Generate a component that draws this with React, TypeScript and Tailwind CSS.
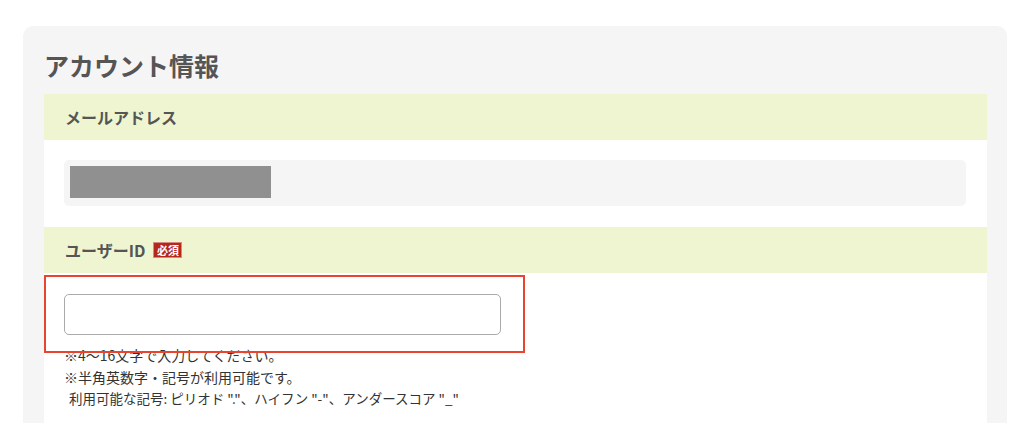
import React from 'react';

const font = { fontFamily: '"Noto Sans CJK JP", "Noto Sans", sans-serif' };

const SectionHeader: React.FC<{ label: string; required?: boolean }> = ({ label, required }) => (
  <div className="h-[46px] bg-[#eef5d0] px-[21px] flex items-center gap-2">
    <span className="text-[16px] font-bold text-[#555]">{label}</span>
    {required && (
      <span className="h-[16px] w-[29px] flex items-center justify-center bg-[#b5261c] border border-[#d88a80] text-white text-[11px] font-bold leading-none">
        必須
      </span>
    )}
  </div>
);

const App: React.FC = () => {
  return (
    <div className="min-h-[423px] bg-white pt-[26px] pl-[23px] pr-[17px] overflow-hidden" style={font}>
      <div className="bg-[#f5f5f5] rounded-t-[10px] pt-[21px] pl-[21px] pr-[20px] h-[397px]">
        <h1 className="text-[25px] leading-[36px] font-bold text-[#555] mb-[11px]">アカウント情報</h1>

        <div className="bg-white relative h-full">
          <SectionHeader label="メールアドレス" />
          <div className="pt-[20px] pb-[21px] pl-[20px] pr-[21px]">
            <div className="h-[46px] rounded-[5px] bg-[#f5f5f5] pt-[6px] pl-[6px]">
              <div className="w-[201px] h-[32px] bg-[#909090]" />
            </div>
          </div>

          <SectionHeader label="ユーザーID" required />
          <div className="pt-[21px] pl-[20px]">
            <input
              type="text"
              className="block w-[437px] h-[41px] rounded-[5px] border border-[#aaa] bg-white outline-none"
            />
            <div className="mt-[10px] text-[14px] leading-[21.5px] text-[#333]">
              <p>※4〜16文字で入力してください。</p>
              <p>※半角英数字・記号が利用可能です。</p>
              <p className="pl-[5px] text-[13.5px]">利用可能な記号: ピリオド "."、ハイフン "-"、アンダースコア "_"</p>
            </div>
          </div>

          <div className="absolute left-0 top-[181px] w-[481px] h-[78px] border-2 border-[#e8442f] pointer-events-none" />
        </div>
      </div>
    </div>
  );
};

export default App;
